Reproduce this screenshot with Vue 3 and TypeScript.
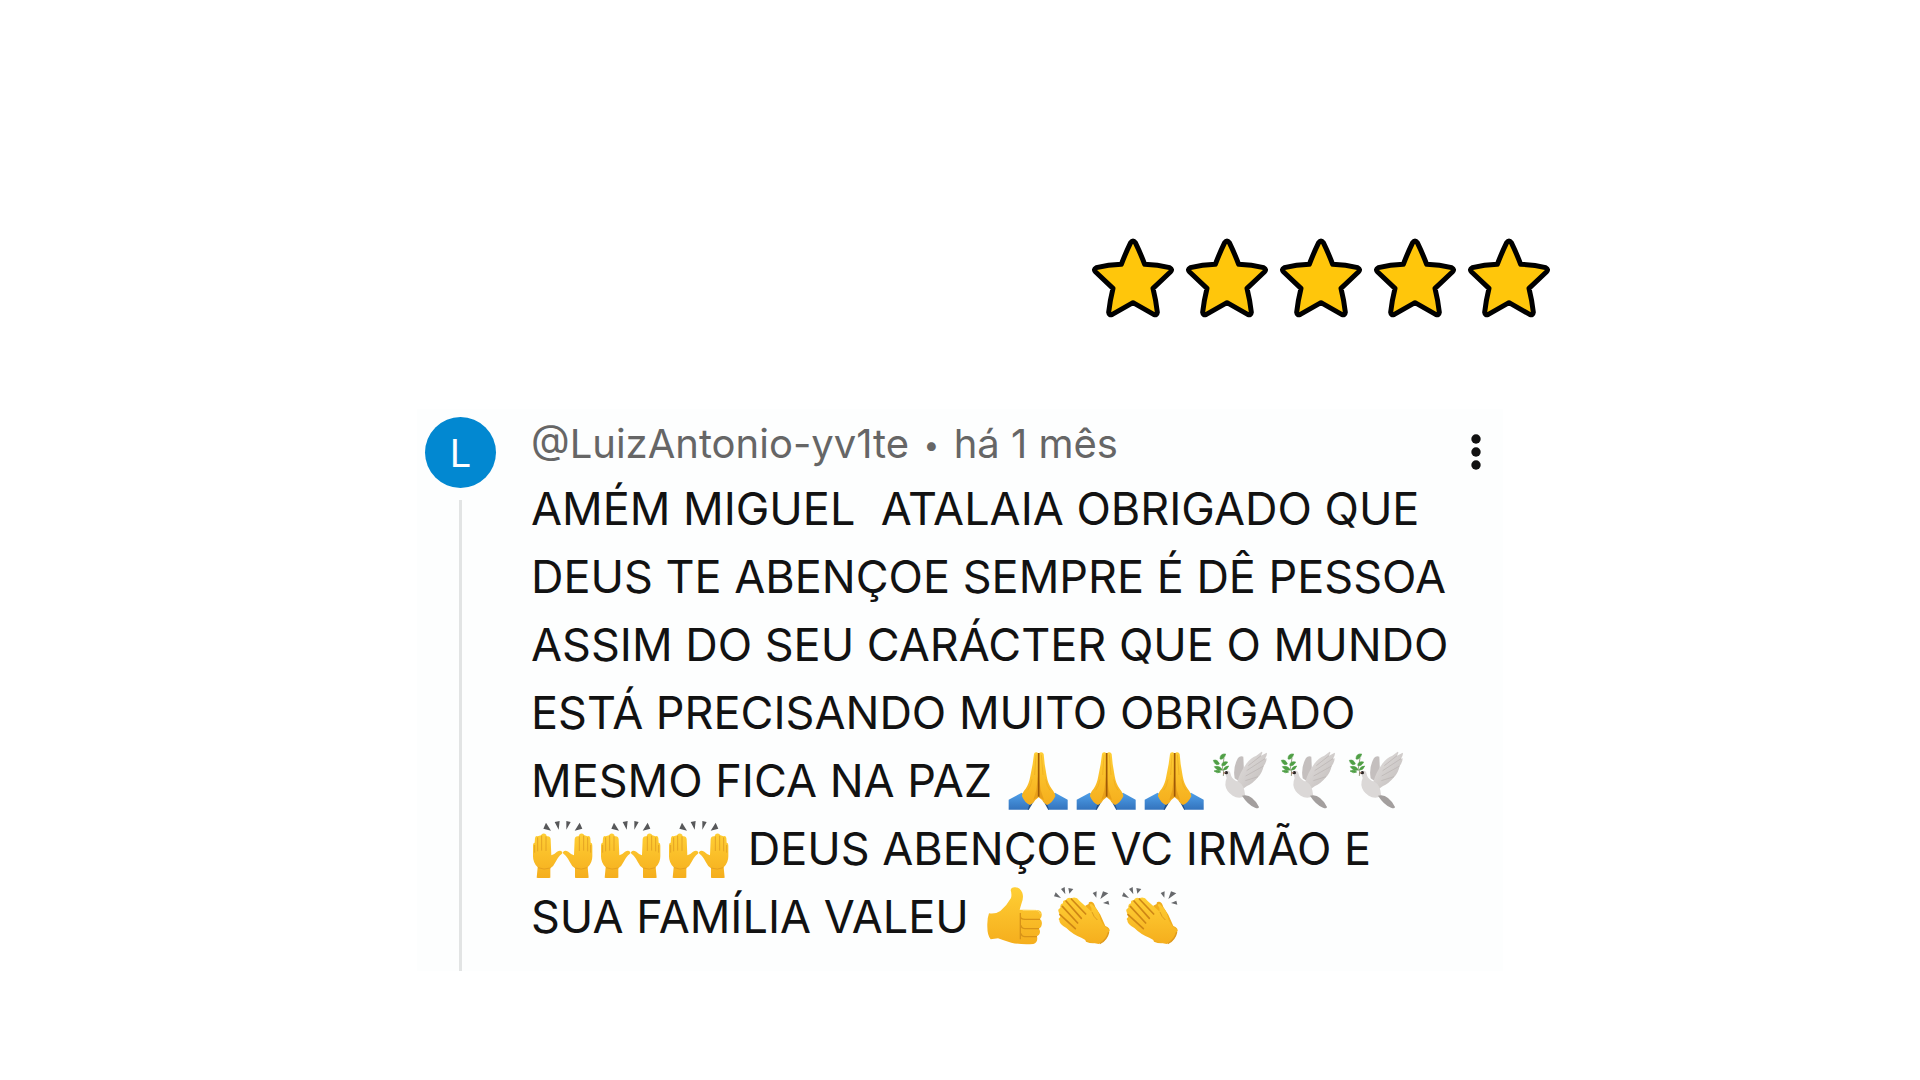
<script setup lang="ts">
type Emoji = 'pray' | 'dove' | 'raised' | 'thumb' | 'clap'
interface Token {
  text?: string
  emoji?: Emoji
}

const labels: Record<Emoji, string> = {
  pray: 'mãos em oração',
  dove: 'pomba da paz',
  raised: 'mãos para cima',
  thumb: 'polegar para cima',
  clap: 'aplausos',
}

const boxes: Record<Emoji, string> = {
  pray: '16 30 204 180',
  dove: '27 30 204 180',
  raised: '33 39 204 180',
  thumb: '33 48 204 180',
  clap: '237 48 204 180',
}

const stars = 5

const lines: Token[][] = [
  [{ text: 'AMÉM MIGUEL  ATALAIA OBRIGADO QUE' }],
  [{ text: 'DEUS TE ABENÇOE SEMPRE É DÊ PESSOA' }],
  [{ text: 'ASSIM DO SEU CARÁCTER QUE O MUNDO' }],
  [{ text: 'ESTÁ PRECISANDO MUITO OBRIGADO' }],
  [
    { text: 'MESMO FICA NA PAZ ' },
    { emoji: 'pray' }, { emoji: 'pray' }, { emoji: 'pray' },
    { emoji: 'dove' }, { emoji: 'dove' }, { emoji: 'dove' },
  ],
  [
    { emoji: 'raised' }, { emoji: 'raised' }, { emoji: 'raised' },
    { text: ' DEUS ABENÇOE VC IRMÃO E' },
  ],
  [
    { text: 'SUA FAMÍLIA VALEU ' },
    { emoji: 'thumb' }, { emoji: 'clap' }, { emoji: 'clap' },
  ],
]
</script>

<template>
  <main class="page">
    <svg class="defs" aria-hidden="true">
      <defs>
        <linearGradient id="skin" x1="0" y1="0" x2="0" y2="1">
          <stop offset="0" stop-color="#ffcf35" />
          <stop offset="1" stop-color="#f5ae1d" />
        </linearGradient>
        <linearGradient id="sleeve" x1="0" y1="0" x2="0" y2="1">
          <stop offset="0" stop-color="#4fa0ea" />
          <stop offset="1" stop-color="#3373bd" />
        </linearGradient>
        <linearGradient id="feather" x1="0" y1="0" x2="1" y2="1">
          <stop offset="0" stop-color="#e3e0df" />
          <stop offset="1" stop-color="#c0bbb9" />
        </linearGradient>

        <g id="pray">
          <path d="M27 179 L66 158 L108 188 L98 209 H27Z" fill="url(#sleeve)" />
          <path d="M204 179 L166 158 L124 188 L134 209 H204Z" fill="url(#sleeve)" />
          <path d="M89 194 L98 190 L96 209 H84Z M143 194 L134 190 L136 209 H148Z" fill="#234f87" />
          <path d="M101 187 L117 172 L133 187 L146 210 H87Z" fill="#fdfefe" />
          <path d="M103 42 Q104 36 111 37 L117 40 L117 172 Q108 178 101 188 L91 195 Q76 190 67 169 Q66 160 78 146 Q88 132 92 108 L99 72Z" fill="url(#skin)" />
          <path d="M132 42 Q130 36 123 37 L117 40 L117 172 Q126 178 133 188 L142 195 Q157 190 167 169 Q167 160 156 146 Q145 132 141 108 L135 72Z" fill="url(#skin)" />
          <path d="M116 100 L110 150 L101 180 L117 170 L133 180 L123 150Z" fill="#d3820e" opacity="0.4" />
          <path d="M117 39 V170" stroke="#9f5907" stroke-width="5" fill="none" />
          <path d="M109 44 L105 105 M125 44 L130 105 M97 118 Q94 139 84 151 M138 118 Q141 139 151 151" stroke="#e39b17" stroke-width="2" fill="none" opacity="0.6" />
        </g>

        <g id="dove">
          <path d="M104 115 Q98 82 114 54 Q120 47 130 50 L132 96 L125 130Z" fill="#c4bfbe" />
          <path d="M112 126 Q119 98 139 71 Q152 53 169 47 L185 35 Q190 36 183 47 L200 38 Q203 43 195 56 L200 55 Q200 66 191 78 Q187 98 174 112 Q156 133 141 138 L123 151Z" fill="url(#feather)" />
          <path d="M78 94 Q89 89 92 102 Q94 115 107 122 Q128 127 133 151 L136 169 Q115 178 98 167 Q78 154 76 135 Q76 122 80 114 Q75 107 78 94Z" fill="#dbd8d7" />
          <path d="M126 167 Q144 163 156 174 Q171 186 177 201 Q176 207 165 203 Q144 195 126 167Z" fill="#a39f9e" />
          <path d="M145 77 L183 47 M140 92 L195 56 M137 108 L191 78 M136 122 L174 110" stroke="#b8b2b0" stroke-width="2" fill="none" />
          <path d="M70 108 L71 92 L50 82 M66 91 L72 54" stroke="#65794a" stroke-width="2" fill="none" />
          <path d="M77 42 Q60 40 60 57 Q72 60 77 42Z M40 61 Q53 57 58 72 Q46 79 40 61Z M83 66 Q67 62 65 76 Q76 80 83 66Z M43 80 Q59 76 66 89 Q54 96 43 80Z M42 93 Q55 87 62 96 Q53 102 42 93Z M86 78 Q72 79 70 90 Q81 92 86 78Z" fill="#4f9f45" stroke="#4f9f45" stroke-width="2" />
          <circle cx="79" cy="98" r="5" fill="#292525" />
          <path d="M70 96 L78 97 L70 104Z" fill="#a07b68" />
        </g>

        <g id="hand">
          <path d="M50 218 L53 187 Q39 174 39 154 L39 123 Q39 113 44 113 L45 99 Q47 91 53 94 L63 91 Q66 83 75 86 Q80 88 80 94 Q91 92 92 103 L94 151 Q102 149 111 140 Q121 134 126 140 Q129 144 124 148 Q117 152 108 169 Q101 184 91 190 L91 218 Q70 221 50 218Z" fill="url(#skin)" />
          <path d="M53 97 V139 M65 92 V137 M78 94 V138 M44 120 V143" stroke="#e4a323" stroke-width="3" fill="none" />
          <path d="M54 188 Q72 196 91 189" stroke="#e6a01e" stroke-width="3" fill="none" />
        </g>
        <g id="raised">
          <use href="#hand" />
          <use href="#hand" transform="translate(256 0) scale(-1 1)" />
          <path d="M78 53 L70 71 L93 77Z M104 51 L119 48 L116 74Z M152 51 L139 48 L139 74Z M179 53 L187 71 L164 77Z" fill="#57585a" />
        </g>

        <g id="thumb">
          <path d="M57 130 Q76 133 91 123 Q111 106 123 84 Q126 72 122 61 Q123 52 134 52 Q149 51 157 68 Q162 84 154 102 L149 119 L196 120 Q214 119 215 132 Q216 143 210 147 Q219 154 214 169 Q211 174 207 176 Q213 185 207 194 L201 199 Q205 217 190 222 Q155 225 124 218 Q99 211 84 205 L62 208 Q52 196 52 171 Q51 145 57 130Z" fill="url(#skin)" />
          <path d="M210 148 H165 Q151 148 151 138 M207 176 H164 Q153 175 153 166 M201 200 H164 Q153 198 154 190 M151 129 V208" stroke="#d89318" stroke-width="4" fill="none" />
          <path d="M158 121 H196 Q210 122 211 133" stroke="#ffd967" stroke-width="3" fill="none" />
        </g>

        <g id="clap">
          <path d="M346 107 L356 102 Q355 94 364 95 Q372 96 376 111 L391 134 L406 168 Q421 174 418 182 L404 211 Q373 226 348 215 L343 202Z" fill="#f0ad1d" />
          <path d="M266 126 Q262 117 271 114 Q270 101 279 100 Q278 89 287 91 Q292 80 304 85 Q318 78 329 93 L365 125 Q366 112 359 105 Q363 97 371 108 Q384 119 388 136 Q392 157 404 168 L419 181 Q414 207 386 222 Q354 216 334 203 Q309 194 289 174 Q267 162 268 151 Q263 147 271 141Z" fill="url(#skin)" />
          <path d="M304 87 L347 132 M288 93 L334 145 M277 109 L323 159 M270 134 L316 176" stroke="#cf8715" stroke-width="5" stroke-linecap="round" fill="none" />
          <path d="M366 126 Q371 141 382 150" stroke="#dc9c1e" stroke-width="3" fill="none" />
          <path d="M389 221 Q411 210 416 186" stroke="#df991b" stroke-width="4" fill="none" />
          <path d="M257 67 L252 79 L273 84Z M273 57 L284 51 L286 73Z M295 54 L310 57 L298 71Z M368 69 L380 64 L379 83Z M399 64 L415 70 L391 87Z M415 92 L418 104 L399 99Z" fill="#67696c" />
        </g>
      </defs>
    </svg>

    <div class="rating" role="img" aria-label="5 estrelas">
      <svg v-for="n in stars" :key="n" class="star" viewBox="36 52 246 240">
        <path
          d="M152 66 Q159 56 166 66 Q182 99 194 131 Q233 132 269 141 Q279 146 271 154 L219 203 Q228 239 232 275 Q231 285 221 281 L159 246 L97 281 Q87 285 86 275 Q90 239 99 203 L47 154 Q39 146 49 141 Q85 132 124 131 Q136 99 152 66Z"
          fill="#ffc60b"
          stroke="#000"
          stroke-width="15"
          stroke-linejoin="round"
        />
      </svg>
    </div>

    <article class="comment">
      <aside class="side">
        <div class="avatar">L</div>
        <div class="thread"></div>
      </aside>
      <div class="body">
        <header class="meta">@LuizAntonio-yv1te <span class="dot">•</span> há 1 mês</header>
        <p class="message">
          <span v-for="(line, i) in lines" :key="i" class="line"><template
            v-for="(token, j) in line" :key="j"><svg
              v-if="token.emoji" class="emoji" :viewBox="boxes[token.emoji]" role="img"
              :aria-label="labels[token.emoji]"><use :href="'#' + token.emoji" /></svg><template
              v-else>{{ token.text }}</template></template></span>
        </p>
      </div>
      <button class="more" type="button" aria-label="Mais opções">
        <svg viewBox="0 0 40 40" width="40" height="40">
          <circle cx="20" cy="7" r="4.7" />
          <circle cx="20" cy="20" r="4.7" />
          <circle cx="20" cy="33" r="4.7" />
        </svg>
      </button>
    </article>
  </main>
</template>

<style>
body {
  margin: 0;
  background: #fff;
}
</style>

<style scoped>
.page {
  display: flex;
  flex-direction: column;
  align-items: center;
  padding: 238px 24px 110px;
  font-family: Inter, "Liberation Sans", sans-serif;
}

.defs {
  position: absolute;
  width: 0;
  height: 0;
}

.rating {
  display: flex;
  justify-content: flex-end;
  gap: 12px;
  width: 100%;
  max-width: 1180px;
}

.star {
  width: 82px;
  height: 80px;
}

.comment {
  display: flex;
  box-sizing: border-box;
  width: 100%;
  max-width: 1086px;
  margin-top: 91px;
  padding: 8px 7px 0;
  background: #fdfefe;
}

.side {
  display: flex;
  flex-direction: column;
  align-items: center;
  flex: none;
  width: 73px;
  margin-right: 34px;
}

.avatar {
  width: 71px;
  height: 71px;
  border-radius: 50%;
  background: #0288d1;
  color: #fff;
  font-size: 38px;
  line-height: 72px;
  text-align: center;
}

.thread {
  flex: 1;
  width: 3px;
  margin-top: 12px;
  background: #e2e4e4;
}

.body {
  flex: 1;
  min-width: 0;
}

.meta {
  color: #666;
  font-size: 40px;
  line-height: 54px;
}

.dot {
  display: inline-block;
  width: 22px;
  font-size: 28px;
  line-height: 28px;
  text-align: center;
  vertical-align: 3px;
}

.message {
  margin: 4px 0 20px;
  color: #121212;
  font-size: 45px;
  line-height: 68px;
}

.line {
  display: block;
  height: 68px;
  white-space: pre;
}

.emoji {
  width: 68px;
  height: 60px;
  vertical-align: -13px;
}

.more {
  flex: none;
  width: 40px;
  height: 40px;
  margin-top: 15px;
  padding: 0;
  border: 0;
  background: none;
  color: #111;
}

.more svg {
  display: block;
  fill: currentColor;
}
</style>
